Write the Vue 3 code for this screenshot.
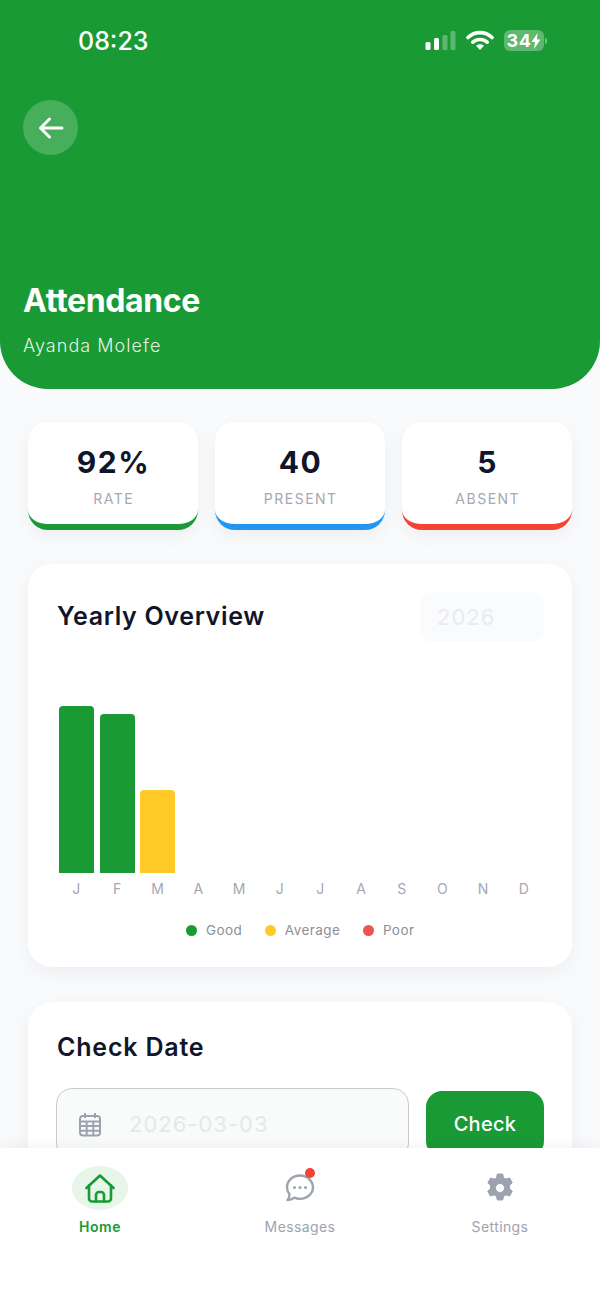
<script setup>
const stats = [
  { value: '92%', label: 'RATE', tone: 'green' },
  { value: '40', label: 'PRESENT', tone: 'blue' },
  { value: '5', label: 'ABSENT', tone: 'red' },
]
const months = [
  { m: 'J', h: 167, c: '#1a9a34' }, { m: 'F', h: 159, c: '#1a9a34' }, { m: 'M', h: 83, c: '#ffca28' },
  { m: 'A', h: 0 }, { m: 'M', h: 0 }, { m: 'J', h: 0 }, { m: 'J', h: 0 }, { m: 'A', h: 0 },
  { m: 'S', h: 0 }, { m: 'O', h: 0 }, { m: 'N', h: 0 }, { m: 'D', h: 0 },
]
const legend = [
  { label: 'Good', c: '#1a9a34' }, { label: 'Average', c: '#ffca28' }, { label: 'Poor', c: '#ef5350' },
]
</script>

<template>
  <div class="page">
    <main class="scroll">
      <header class="hero">
        <div class="status">
          <span class="time">08:23</span>
          <div class="status-icons">
            <svg class="signal" width="31" height="20" viewBox="0 0 31 20">
              <rect x="0.500" y="11" width="5" height="8" rx="1.500" fill="#fff" />
              <rect x="9" y="7" width="5" height="12" rx="1.500" fill="#fff" />
              <rect x="17.500" y="4" width="5" height="15" rx="1.500" fill="#fff" opacity=".3" />
              <rect x="25.500" y="0" width="5" height="19" rx="1.500" fill="#fff" opacity=".3" />
            </svg>
            <svg width="28" height="20" viewBox="0 0 28 20" fill="none" stroke="#fff" stroke-width="3.600" stroke-linecap="round">
              <path d="M2 7.500C9 1 19 1 26 7.500" />
              <path d="M6.800 12.200C11 8.500 17 8.500 21.200 12.200" />
              <path d="M14 20l-4-4.200c2-2 6-2 8 0z" fill="#fff" stroke="none" />
            </svg>
            <div class="battery">
              <div class="battery-body">
                <span>34</span>
                <svg width="10" height="16" viewBox="0 0 10 16"><path d="M6.500 0L0.500 9h3.500L3 16l6.500-9.500H6z" fill="#fff" /></svg>
              </div>
              <i class="nub"></i>
            </div>
          </div>
        </div>
        <button class="back" aria-label="Back">
          <svg width="28" height="28" viewBox="0 0 28 28" fill="none" stroke="#fff" stroke-width="3" stroke-linecap="round" stroke-linejoin="round">
            <path d="M25 14H3.500M12.500 5L3.500 14l9 9" />
          </svg>
        </button>
        <h1>Attendance</h1>
        <p class="name">Ayanda Molefe</p>
      </header>

      <section class="stats">
        <div v-for="s in stats" :key="s.label" class="stat" :class="s.tone">
          <strong>{{ s.value }}</strong>
          <span>{{ s.label }}</span>
        </div>
      </section>

      <section class="card overview">
        <div class="card-head">
          <h2>Yearly Overview</h2>
          <div class="year">2026</div>
        </div>
        <div class="chart">
          <div v-for="(b, i) in months" :key="i" class="col">
            <div class="plot">
              <div v-if="b.h" class="bar" :style="{ height: b.h + 'px', background: b.c }"></div>
            </div>
            <span class="m">{{ b.m }}</span>
          </div>
        </div>
        <div class="legend">
          <div v-for="l in legend" :key="l.label" class="leg">
            <i :style="{ background: l.c }"></i>{{ l.label }}
          </div>
        </div>
      </section>

      <section class="card check">
        <h2>Check Date</h2>
        <div class="check-row">
          <div class="field">
            <svg width="24" height="25" viewBox="0 0 24 25" fill="none" stroke="#9ca3af" stroke-width="2">
              <rect x="2" y="4" width="20" height="19.500" rx="3" />
              <path d="M7 1v5M17 1v5M2 9.500h20M2 14h20M2 18.800h20M8.700 9.500v14M15.300 9.500v14" />
            </svg>
            <span>2026-03-03</span>
          </div>
          <button class="go">Check</button>
        </div>
      </section>
    </main>

    <nav class="tabs">
      <div class="tab active">
        <div class="icon pill">
          <svg width="30" height="30" viewBox="0 0 30 30" fill="none" stroke="#1a9a34" stroke-width="2.600" stroke-linecap="round" stroke-linejoin="round">
            <path d="M1.500 15L15 2.500 28.500 15" />
            <path d="M4 12.500v13a3 3 0 0 0 3 3h16a3 3 0 0 0 3-3v-13" />
            <path d="M11 28.500V22a3 3 0 0 1 3-3h2a3 3 0 0 1 3 3v6.500" />
          </svg>
        </div>
        <span>Home</span>
      </div>
      <div class="tab">
        <div class="icon">
          <svg width="32" height="32" viewBox="0 0 32 32" fill="none">
            <path d="M16 3.500C8.800 3.500 3 8.800 3 15.300c0 2.600.9 5 2.500 7 .3 1.700-.6 4-2 5.700 2.700-.2 5-1 6.700-2.300 1.800.8 3.700 1.200 5.800 1.200 7.200 0 13-5.300 13-11.600S23.200 3.500 16 3.500z" stroke="#9ca3af" stroke-width="2.400" stroke-linejoin="round" />
            <circle cx="10.500" cy="15.500" r="1.500" fill="#9ca3af" />
            <circle cx="16" cy="15.500" r="1.500" fill="#9ca3af" />
            <circle cx="21.500" cy="15.500" r="1.500" fill="#9ca3af" />
          </svg>
          <i class="dot"></i>
        </div>
        <span>Messages</span>
      </div>
      <div class="tab">
        <div class="icon">
          <svg width="30" height="30" viewBox="0 0 30 30">
            <path fill="#9ca3af" fill-rule="evenodd" d="M12.300 1h5.400l.9 3.800 2.200 1.300 3.800-1.100 2.700 4.700-2.800 2.700v3.200l2.800 2.700-2.700 4.700-3.800-1.100-2.200 1.300-.9 3.800h-5.400l-.9-3.800-2.200-1.300-3.800 1.100-2.700-4.700 2.800-2.700v-3.200L2.900 9.700l2.700-4.700 3.800 1.100 2.200-1.300zM15 10.500a4.500 4.500 0 1 0 0 9 4.500 4.500 0 0 0 0-9z" stroke="#9ca3af" stroke-width="1" stroke-linejoin="round" />
          </svg>
        </div>
        <span>Settings</span>
      </div>
    </nav>
  </div>
</template>

<style>
html, body { margin: 0; background: #f8fafc; }
</style>

<style scoped>
* { box-sizing: border-box; }
.page {
  width: 600px; height: 1300px; display: flex; flex-direction: column;
  background: #f8fafc; overflow: hidden;
  font-family: Inter, "Liberation Sans", sans-serif; color: #11152a;
}
.scroll { flex: 1; min-height: 0; overflow: hidden; }
.hero {
  height: 389px; background: #1a9a34; color: #fff;
  border-radius: 0 0 48px 48px; padding: 0 0 0 23px;
  display: flex; flex-direction: column; align-items: flex-start;
}
.status {
  align-self: stretch; height: 82px; display: flex; justify-content: space-between;
  padding: 30px 53px 0 55px;
}
.time { font-size: 25px; font-weight: 500; line-height: 22px; }
.status-icons { display: flex; gap: 10px; align-items: flex-start; }
.signal { margin-top: 1px; }
.battery { display: flex; align-items: center; }
.battery-body {
  width: 40px; height: 21px; border-radius: 6px; background: rgba(255,255,255,.3);
  display: flex; align-items: center; justify-content: center;
  font-size: 18px; font-weight: 700; letter-spacing: .5px;
}
.nub { width: 2px; height: 6px; margin-left: 1px; background: rgba(255,255,255,.4); border-radius: 0 2px 2px 0; }
.back {
  width: 55px; height: 55px; margin-top: 18px; border: 0; padding: 0; border-radius: 50%;
  background: rgba(255,255,255,.2); display: flex; align-items: center; justify-content: center;
}
h1 { margin: 128px 0 0; font-size: 32px; font-weight: 700; line-height: 36px; letter-spacing: -.35px; }
.name { margin: 15px 0 0; font-size: 18px; font-weight: 300; line-height: 24px; letter-spacing: 1.05px; color: rgba(255,255,255,.9); }
.stats { display: flex; gap: 17px; padding: 33px 28px 0; }
.stat {
  flex: 1; height: 108px; background: #fff; border-radius: 20px; border-bottom: 6px solid;
  box-shadow: 0 6px 18px rgba(15,23,42,.05);
  display: flex; flex-direction: column; align-items: center; padding-top: 21px;
}
.stat.green { border-color: #1a9a34; }
.stat.blue { border-color: #2196f3; }
.stat.red { border-color: #f44336; }
.stat strong { font-size: 30px; line-height: 38px; font-weight: 700; letter-spacing: 1.500px; padding-left: 1px; }
.stat span { margin-top: 8px; padding-left: 1.500px; font-size: 14px; line-height: 20px; letter-spacing: 1.500px; color: #a3a8b1; }
.card {
  margin: 34px 28px 0; background: #fff; border-radius: 24px; padding: 28px;
  box-shadow: 0 6px 20px rgba(15,23,42,.05);
}
.overview { height: 403px; }
.card-head { display: flex; justify-content: space-between; align-items: center; height: 50px; }
h2 { margin: 0 0 0 1px; font-size: 25px; font-weight: 600; line-height: 32px; letter-spacing: .66px; position: relative; top: -1px; }
.year {
  width: 124px; height: 50px; background: #fafbfc; border-radius: 12px; padding-left: 17px;
  display: flex; align-items: center; font-size: 22px; letter-spacing: 1px; color: #e9ebee;
}
.chart { display: flex; }
.col { flex: 1; display: flex; flex-direction: column; align-items: center; }
.plot { height: 231px; display: flex; align-items: flex-end; }
.bar { width: 35px; border-radius: 4px 4px 0 0; }
.m { margin-top: 7px; font-size: 14px; line-height: 18px; color: #a3a8b1; }
.legend { display: flex; justify-content: center; gap: 23px; margin-top: 23px; padding-left: 1px; }
.leg { display: flex; align-items: center; gap: 8.500px; font-size: 13.500px; line-height: 19px; letter-spacing: .45px; color: #8b9099; }
.leg i { width: 11px; height: 11px; border-radius: 50%; }
.check { margin-top: 35px; padding-top: 29px; height: 300px; }
.check h2 { top: 0; letter-spacing: .8px; }
.check-row { display: flex; gap: 17px; align-items: center; margin-top: 25px; }
.field {
  flex: 1; height: 72px; border: 1.500px solid #c8ccc9; border-radius: 16px; background: #f9fbfb;
  display: flex; align-items: center; gap: 27px; padding-left: 21px;
  font-size: 22px; letter-spacing: 1px; color: #e5e7eb;
}
.go {
  width: 118px; height: 66px; border: 0; border-radius: 16px; background: #1a9a34; color: #fff;
  font-family: inherit; font-size: 20px; font-weight: 500; letter-spacing: .3px;
}
.tabs {
  flex: none; height: 152px; background: #fff; display: flex; position: relative;
  box-shadow: 0 -3px 12px rgba(15,23,42,.05); padding-top: 18px;
}
.tab { flex: 1; display: flex; flex-direction: column; align-items: center; font-size: 14px; line-height: 18px; letter-spacing: .4px; color: #9ca3af; }
.tab.active { color: #1a9a34; font-weight: 600; letter-spacing: .6px; }
.icon { width: 56px; height: 44px; display: flex; align-items: center; justify-content: center; position: relative; margin-bottom: 7.500px; }
.pill { background: #e8f5e9; border-radius: 50%; }
.dot { position: absolute; top: 2px; right: 13px; width: 10px; height: 10px; border-radius: 50%; background: #f44336; }
</style>
